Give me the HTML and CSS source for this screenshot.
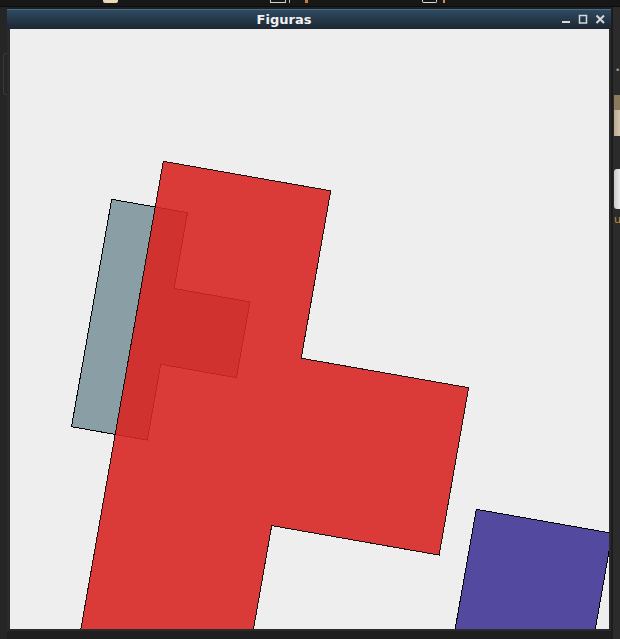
FILE: index.html
```html
<!DOCTYPE html>
<html>
<head>
<meta charset="utf-8">
<link rel="stylesheet" href="styles.css">
</head>
<body>
<div class="desk">
  <div class="panel">
    <span class="pi pi-a"></span>
    <span class="pi pi-b"></span>
    <span class="pi pi-c"></span>
    <span class="pi pi-d"></span>
    <span class="pi pi-e"></span>
    <span class="pi pi-f"></span>
  </div>
  <div class="row">
    <div class="left-strip"><div class="ls-box"></div></div>
    <div class="window">
      <div class="titlebar">
        <div class="spacer"></div>
        <div class="title">Figuras</div>
        <div class="spacer"></div>
        <svg class="wbtns" width="50" height="20" viewBox="0 0 50 20">
          <rect x="1" y="12" width="8" height="2" fill="#d8d8d8"/>
          <rect x="18.5" y="6.5" width="7" height="7.5" fill="none" stroke="#d8d8d8" stroke-width="1.5"/>
          <path d="M35.5 6.5 L43 14 M43 6.5 L35.5 14" stroke="#d8d8d8" stroke-width="2" fill="none"/>
        </svg>
      </div>
      <div class="client">
        <svg class="canvas" width="599" height="600" viewBox="0 0 599 600" shape-rendering="crispEdges">
          <polygon class="gray" points="101.7,170.3 177.5,183.7 164.1,259.5 239.9,272.9 226.5,348.7 150.7,335.3 137.3,411.1 61.5,397.7"/>
          <polygon class="red" points="153.3,132.3 320.7,161.8 291.2,329.2 458.6,358.7 429.1,526.1 261.7,496.6 232.2,664 64.8,634.5"/>
          <polygon class="blue" points="466.3,480.3 602.2,504.3 578.2,640.2 442.3,616.2"/>
        </svg>
      </div>
    </div>
    <div class="right-strip">
      <div class="rs-dot">•</div>
      <div class="rs-tan"></div>
      <div class="rs-beige"></div>
      <div class="rs-white"></div>
      <div class="rs-u">u</div>
    </div>
  </div>
</div>
</body>
</html>
```
FILE: styles.css
```css
html, body {
  margin: 0;
  padding: 0;
  background: #1f1f1f;
  width: 620px;
  height: 639px;
  overflow: hidden;
}

.desk {
  display: flex;
  flex-direction: column;
  width: 620px;
  height: 639px;
}

.panel {
  height: 7px;
  background: #171717;
  display: flex;
  align-items: flex-start;
  border-bottom: 1px solid #0d0d0d;
  box-sizing: border-box;
}

.pi { display: block; height: 3px; }
.pi-a { margin-left: 103px; width: 15px; background: #e9d9b4; border-radius: 0 0 2px 2px; }
.pi-b { margin-left: 152px; width: 14px; height: 2px; border: 1px solid #cfcfcf; border-top: none; }
.pi-c { margin-left: 3px; width: 1px; background: #bbb; }
.pi-d { margin-left: 15px; width: 3px; background: #c08040; }
.pi-e { margin-left: 114px; width: 13px; height: 2px; border: 1px solid #d8d8d8; border-top: none; border-radius: 0 0 2px 2px; }
.pi-f { margin-left: 6px; width: 2px; background: #d89040; }

.row {
  display: flex;
  flex: 1;
}

.left-strip {
  width: 7px;
  background: #252525;
  padding-top: 46px;
  box-sizing: border-box;
}

.ls-box {
  width: 4px;
  margin-left: 3px;
  height: 40px;
  border: 1px solid #3a3a3a;
  border-right: none;
  border-radius: 3px 0 0 3px;
}

.window {
  width: 604px;
  margin-top: 2px;
  display: flex;
  flex-direction: column;
}

.titlebar {
  height: 20px;
  box-sizing: border-box;
  display: flex;
  align-items: center;
  background: linear-gradient(#2e4a61, #1c2631);
  border-top: 1px solid #4b6d88;
}

.spacer { flex: 1; }

.title {
  font-family: "DejaVu Sans", sans-serif;
  font-weight: bold;
  font-size: 13px;
  color: #f2f2f2;
  line-height: 18px;
}

.wbtns { display: block; margin-top: -1px; }

.client {
  border-left: 3px solid #2a2a2a;
  border-right: 2px solid #2a2a2a;
  border-bottom: 2px solid #2a2a2a;
  background: #eeeeee;
  width: 599px;
  height: 600px;
}

.canvas { display: block; }

.gray { fill: #8a9ea5; stroke: #000; stroke-width: 1; }
.red { fill: rgb(215, 38, 36); fill-opacity: 0.9; stroke: #000; stroke-opacity: 0.9; stroke-width: 1; }
.blue { fill: #53499f; stroke: #000; stroke-width: 1; }

.right-strip {
  width: 9px;
  background: #2b2b2b;
  border-left: 2px solid #1c1c1c;
  box-sizing: border-box;
  display: flex;
  flex-direction: column;
  align-items: flex-end;
}

.rs-dot {
  margin-top: 58px;
  font-family: "DejaVu Sans", sans-serif;
  font-size: 9px;
  line-height: 10px;
  color: #9a9a9a;
  width: 5px;
}

.rs-tan {
  margin-top: 20px;
  width: 6px;
  height: 15px;
  background: #8c7b5b;
}

.rs-beige {
  width: 6px;
  height: 26px;
  background: linear-gradient(90deg, #bba98e, #d2c5b0);
}

.rs-white {
  margin-top: 33px;
  width: 6px;
  height: 40px;
  background: linear-gradient(90deg, #c9c9c9, #ececec);
  border-radius: 3px 0 0 3px;
}

.rs-u {
  margin-top: 5px;
  font-family: "DejaVu Sans", sans-serif;
  font-size: 11px;
  line-height: 12px;
  color: #c58a3c;
  width: 6px;
  overflow: hidden;
}
```
